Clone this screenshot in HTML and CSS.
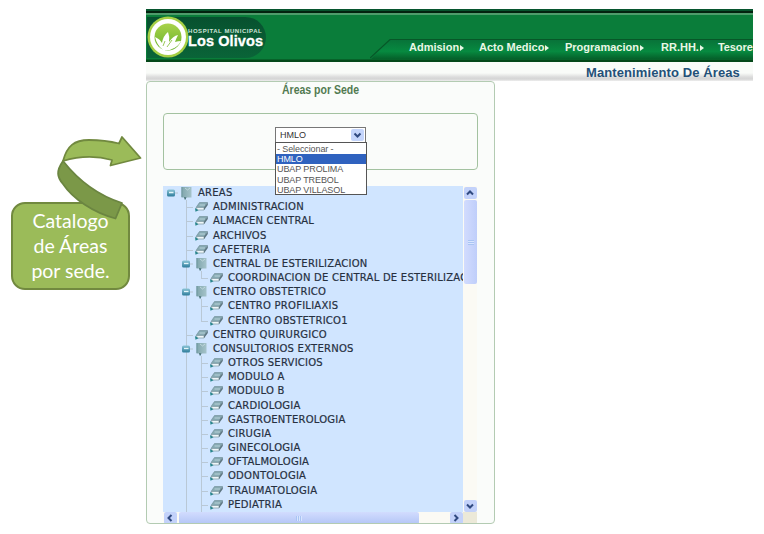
FILE: index.html
```html
<!DOCTYPE html>
<html lang="es">
<head>
<meta charset="utf-8">
<title>Mantenimiento De Áreas</title>
<link rel="stylesheet" href="styles.css">
</head>
<body>
<svg class="defs" width="0" height="0">
  <defs>
    <linearGradient id="tg" x1="0" y1="0" x2="0" y2="1"><stop offset="0" stop-color="#8bc4d6"/><stop offset="1" stop-color="#2d7c9b"/></linearGradient>
    <linearGradient id="fg" x1="0" y1="0" x2="1" y2="0"><stop offset="0" stop-color="#7fa5ac"/><stop offset="1" stop-color="#a5c3ca"/></linearGradient>
    <symbol id="toggle" viewBox="0 0 15 14"><path d="M11 7h4" stroke="#b4c3cf"/><rect x="4" y="3.500" width="8" height="7" rx="1.500" fill="url(#tg)"/><path d="M6 6.500h4.500" stroke="#e4f6fa" stroke-width="1.300"/></symbol>
    <symbol id="folder" viewBox="0 0 15 14"><path d="M3.500 1h10v10.500H8.500L7 14 6 11.500H3.500z" fill="url(#fg)"/><path d="M4 1v10" stroke="#6f979f"/><path d="M7 2l2.500 2L12 2" fill="none" stroke="#c9dee1" stroke-width=".8"/><path d="M6 11l1 3 1.500-2.500z" fill="#466f77"/></symbol>
    <symbol id="leaf" viewBox="0 0 15 14"><path d="M6.500 2.500H14.500L11 7.500H3z" fill="#86a9b2" stroke="#6d8b94" stroke-width=".6"/><path d="M3.500 7.500H11V10H4z" fill="#eef6f9" stroke="#7f99a2" stroke-width=".7"/><path d="M11 10.300L14.800 5V2.500L11 7.500z" fill="#5d7680"/><path d="M6.500 5h5.500" stroke="#b9d3da" stroke-width="1"/><path d="M2 8l3.500 2.200-3 1.600z" fill="#27858c"/></symbol>
    <symbol id="chev" viewBox="0 0 12 12"><path d="M3 4.500l3 3 3-3" fill="none" stroke="#304a80" stroke-width="2"/></symbol>
  </defs>
</svg>
<div class="page">
  <aside class="side">
    <div class="callout">Catalogo<br>de Áreas<br>por sede.</div>
    <svg class="arrow" width="100" height="90" viewBox="50 130 100 90">
      <path d="M63 161C56 171 57 177 63 184C73 199 94 213 115.500 218.500L122 203C103 197 82 185 63 161Z" fill="#7b9848" stroke="#6b8541" stroke-width="1.800" stroke-linejoin="round"/>
      <path d="M63 161C67 146 74 140 89 140C99 140 109 141 119 143.500L122 137L140.500 158L110.500 165.500L112 160C94 155 76 157 63 161Z" fill="#9bbb59" stroke="#71893f" stroke-width="1.800" stroke-linejoin="round"/>
    </svg>
  </aside>
  <main class="app">
    <header class="header">
      <div class="brand">
        <svg class="logo" width="42" height="42" viewBox="0 0 42 42">
          <defs><linearGradient id="lg" x1="0" y1="0" x2="0" y2="1"><stop offset="0" stop-color="#a9d24a"/><stop offset="1" stop-color="#67b22c"/></linearGradient></defs>
          <circle cx="21" cy="21" r="20.500" fill="#a5cf45"/><circle cx="21" cy="21" r="18" fill="#fff"/><circle cx="21" cy="21" r="13.500" fill="url(#lg)"/>
          <path d="M8 21q5 2 7 6q1-7 6-11q2 5 1 10q4-6 9-7q-2 4-3 7q3-1 6-1q-3 6-9 8q-3 2-7 1l-1 2l-2-3q-5-4-7-12z" fill="#fff"/>
          <path d="M16 30l2-5M20 31l5-7" stroke="#9bc95b"/>
        </svg>
        <div class="names"><span class="small">HOSPITAL MUNICIPAL</span><span class="big">Los Olivos</span></div>
      </div>
      <nav class="nav">
        <svg class="slope" width="26" height="22" viewBox="0 0 26 22">
          <defs><linearGradient id="ng" x1="0" y1="0" x2="0" y2="1"><stop offset="0" stop-color="#087339"/><stop offset=".6" stop-color="#078a40"/><stop offset="1" stop-color="#05602a"/></linearGradient></defs>
          <path d="M1 21L20 1.500H26V21z" fill="url(#ng)"/><path d="M0 20L20 1.500H26" fill="none" stroke="#075728" stroke-width="1.200"/></svg>
        <div class="items">
          <span class="m1">Admision<b></b></span><span class="m2">Acto Medico<b></b></span><span class="m3">Programacion<b></b></span><span class="m4">RR.HH.<b></b></span><span class="m5">Tesore</span>
        </div>
      </nav>
    </header>
    <div class="titlebar"><h1>Mantenimiento De Áreas</h1></div>
    <section class="panel">
      <h2>Áreas por Sede</h2>
      <div class="box">
        <div class="select">
          <div class="value"><span>HMLO</span><svg class="drop" width="13" height="12"><use href="#chev"/></svg></div>
          <div class="menu"><div class="o0">- Seleccionar -</div><div class="on">HMLO</div><div>UBAP PROLIMA</div><div>UBAP TREBOL</div><div>UBAP VILLASOL</div></div>
        </div>
      </div>
      <div class="scroller">
        <div class="tree">
          <div class="row"><svg><use href="#toggle"/></svg><svg><use href="#folder"/></svg><span>AREAS</span></div>
          <div class="row"><i></i><i class="t"></i><svg><use href="#leaf"/></svg><span>ADMINISTRACION</span></div>
          <div class="row"><i></i><i class="t"></i><svg><use href="#leaf"/></svg><span>ALMACEN CENTRAL</span></div>
          <div class="row"><i></i><i class="t"></i><svg><use href="#leaf"/></svg><span>ARCHIVOS</span></div>
          <div class="row"><i></i><i class="t"></i><svg><use href="#leaf"/></svg><span>CAFETERIA</span></div>
          <div class="row"><i></i><i class="v"><svg><use href="#toggle"/></svg></i><svg><use href="#folder"/></svg><span>CENTRAL DE ESTERILIZACION</span></div>
          <div class="row"><i></i><i class="v"></i><i class="t end"></i><svg><use href="#leaf"/></svg><span>COORDINACION DE CENTRAL DE ESTERILIZACION</span></div>
          <div class="row"><i></i><i class="v"><svg><use href="#toggle"/></svg></i><svg><use href="#folder"/></svg><span>CENTRO OBSTETRICO</span></div>
          <div class="row"><i></i><i class="v"></i><i class="t"></i><svg><use href="#leaf"/></svg><span>CENTRO PROFILIAXIS</span></div>
          <div class="row"><i></i><i class="v"></i><i class="t end"></i><svg><use href="#leaf"/></svg><span>CENTRO OBSTETRICO1</span></div>
          <div class="row"><i></i><i class="t"></i><svg><use href="#leaf"/></svg><span>CENTRO QUIRURGICO</span></div>
          <div class="row"><i></i><i class="v"><svg><use href="#toggle"/></svg></i><svg><use href="#folder"/></svg><span>CONSULTORIOS EXTERNOS</span></div>
          <div class="row"><i></i><i class="v"></i><i class="t"></i><svg><use href="#leaf"/></svg><span>OTROS SERVICIOS</span></div>
          <div class="row"><i></i><i class="v"></i><i class="t"></i><svg><use href="#leaf"/></svg><span>MODULO A</span></div>
          <div class="row"><i></i><i class="v"></i><i class="t"></i><svg><use href="#leaf"/></svg><span>MODULO B</span></div>
          <div class="row"><i></i><i class="v"></i><i class="t"></i><svg><use href="#leaf"/></svg><span>CARDIOLOGIA</span></div>
          <div class="row"><i></i><i class="v"></i><i class="t"></i><svg><use href="#leaf"/></svg><span>GASTROENTEROLOGIA</span></div>
          <div class="row"><i></i><i class="v"></i><i class="t"></i><svg><use href="#leaf"/></svg><span>CIRUGIA</span></div>
          <div class="row"><i></i><i class="v"></i><i class="t"></i><svg><use href="#leaf"/></svg><span>GINECOLOGIA</span></div>
          <div class="row"><i></i><i class="v"></i><i class="t"></i><svg><use href="#leaf"/></svg><span>OFTALMOLOGIA</span></div>
          <div class="row"><i></i><i class="v"></i><i class="t"></i><svg><use href="#leaf"/></svg><span>ODONTOLOGIA</span></div>
          <div class="row"><i></i><i class="v"></i><i class="t"></i><svg><use href="#leaf"/></svg><span>TRAUMATOLOGIA</span></div>
          <div class="row"><i></i><i class="v"></i><i class="t"></i><svg><use href="#leaf"/></svg><span>PEDIATRIA</span></div>
        </div>
        <div class="vbar"><div class="btn up"><svg><use href="#chev"/></svg></div><div class="thumb"><em></em></div><div class="btn last"><svg><use href="#chev"/></svg></div></div>
        <div class="hbar"><div class="btn left"><svg><use href="#chev"/></svg></div><div class="thumb"><em></em></div><div class="btn last right"><svg><use href="#chev"/></svg></div></div>
        <div class="corner"></div>
      </div>
    </section>
  </main>
</div>
</body>
</html>
```
FILE: styles.css
```css
* { box-sizing: border-box; }
body { margin: 0; background: #fff; font-family: "Liberation Sans", Arial, sans-serif; }
.defs { position: absolute; }
.page { display: grid; grid-template-columns: 146px 607px; width: 764px; height: 534px; overflow: hidden; padding-top: 9px; }

.side { position: relative; padding: 193px 0 0 11px; }
.callout { width: 119px; height: 88px; border: 2.5px solid #71893f; border-radius: 14px; background: #9bbb59; color: #fff; text-align: center; font: 19.5px/25px Lato, "Open Sans", sans-serif; padding-top: 4px; }
.arrow { position: absolute; left: 50px; top: 121px; }

.app { min-width: 0; }
.header { height: 53px; overflow: hidden; display: flex; background: linear-gradient(#07552e 0 2px, #03230f 2px 4px, #4e9c6b 4px 6px, #0a7d3a 6px 50px, #044719 51px 53px); }
.brand { display: flex; width: 119px; height: 41px; margin: 8px 0 0 1px; border-radius: 0 21px 21px 0; background: linear-gradient(#07512f, #0a6438); flex: none; }
.logo { flex: none; margin-top: -1px; }
.names { display: flex; flex-direction: column; color: #fff; font-weight: bold; white-space: nowrap; margin-left: -1px; }
.small { font-size: 6px; line-height: 7px; margin-top: 11px; letter-spacing: .55px; color: #cfe5d9; }
.big { font-size: 14.5px; line-height: 13px; letter-spacing: .1px; -webkit-text-stroke: .3px #fff; }
.nav { display: flex; margin: 29px 0 0 104px; height: 22px; flex: 1; min-width: 0; }
.slope { flex: none; }
.items { flex: 1; min-width: 0; display: flex; height: 20px; border-top: 1px solid #075728; margin-top: 1px; background: linear-gradient(#087339, #078a40 60%, #05602a); color: #e9f7e5; font: bold 11px/15px "Liberation Sans", Arial, sans-serif; white-space: nowrap; overflow: hidden; }
.items span { flex: none; }
.items b { display: inline-block; border: 3px solid transparent; border-left: 4px solid #e9f7e5; border-right: 0; margin-left: 1px; }
.m1 { width: 70px; margin-left: 13px; }
.m2 { width: 86px; }
.m3 { width: 96px; }
.m4 { width: 57px; }
.m5 { letter-spacing: -.1px; }

.titlebar { height: 19px; background: linear-gradient(#f9fbf8 0 11px, #dcdcdc 15px, #d5d5d5 17px, #eee 19px); }
h1 { margin: 0; padding-left: 440px; font-size: 13px; letter-spacing: .1px; line-height: 21px; color: #235078; white-space: nowrap; }

.panel { width: 349px; height: 443px; border: 1px solid #b3cbb2; border-radius: 4px; background: #fafcfa; padding: 0 16px; overflow: hidden; }
h2 { margin: 0; font-size: 12px; line-height: 17px; height: 31px; color: #527a51; text-align: center; white-space: nowrap; transform: scaleX(.875); }
.box { width: 315px; height: 57px; border: 1px solid #a3c2a0; border-radius: 4px; padding: 13px 0 0 111px; }
.select { position: relative; width: 91px; color: #333; font-size: 9px; }
.value { height: 16px; border: 1px solid #777; background: #fff; display: flex; justify-content: space-between; align-items: center; padding: 0 1px 0 4px; }
.drop { background: #c4d5fb; border-radius: 2px; }
.menu { position: absolute; top: 15px; left: 0; width: 92px; height: 53px; border: 1px solid #555; background: #fff; line-height: 10px; color: #555; white-space: nowrap; z-index: 2; padding-top: 1px; }
.menu div { height: 10.2px; padding-left: 1px; letter-spacing: -.1px; }
.menu .on { background: #2f62bf; color: #fff; }

.scroller { display: grid; grid-template-columns: 300px 14px; grid-template-rows: 326px 12px; margin-top: 16px; width: 314px; }
.tree { background: #d0e5ff; overflow: hidden; }
.row { display: flex; height: 14.18px; white-space: nowrap; }
.row svg { width: 15px; height: 14px; flex: none; display: block; }
.row span { padding-left: 5px; font: 10px/14px "DejaVu Sans", Verdana, sans-serif; letter-spacing: .24px; color: #26303f; -webkit-text-stroke: .2px #26303f; }
.row i { width: 15px; flex: none; background: 0 0 no-repeat; }
.row .v, .row .t { background-image: linear-gradient(#b9c8d6, #b9c8d6); background-size: 1px 100%; background-position: 8px 0; }
.row .t { background-image: linear-gradient(#b9c8d6, #b9c8d6), linear-gradient(#b9c8d6, #b9c8d6); background-size: 1px 100%, 7px 1px; background-position: 8px 0, 8px 7px; }
.row .end { background-size: 1px 8px, 7px 1px; }

.vbar { background: #fbfaf4; display: flex; flex-direction: column; padding: 1px 0 0 1px; }
.hbar { background: #fbfaf4; display: flex; padding: 0 0 0 1px; }
.btn { width: 13px; height: 12px; background: #c3d2fa; border-radius: 2px; flex: none; display: flex; }
.btn svg { width: 12px; height: 12px; }
.up svg { transform: rotate(180deg); }
.left svg { transform: rotate(90deg); }
.right svg { transform: rotate(-90deg); }
.vbar .last { margin-top: auto; }
.hbar .last { margin-left: auto; }
.thumb { display: flex; align-items: center; justify-content: center; border-radius: 2px; }
.vbar .thumb { height: 84px; margin-top: 1px; background: linear-gradient(90deg, #d2dcfe, #bfcefa); }
.hbar .thumb { width: 240px; margin-left: 2px; background: linear-gradient(#d2dcfe, #b4c6f6); }
.thumb em { width: 6px; height: 5px; background: repeating-linear-gradient(#a9c4f3 0 1px, #d8e5ff 1px 2px); }
.hbar em { background: repeating-linear-gradient(90deg, #a9c4f3 0 1px, #d8e5ff 1px 2px); }
.corner { background: #ece9d8; }
```
